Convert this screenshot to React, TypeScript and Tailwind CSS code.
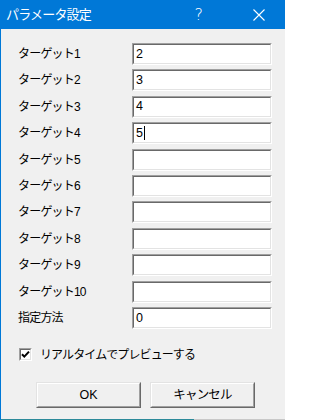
import React from "react";

const rows: { label: string; value: string; caret?: boolean }[] = [
  { label: "ターゲット1", value: "2" },
  { label: "ターゲット2", value: "3" },
  { label: "ターゲット3", value: "4" },
  { label: "ターゲット4", value: "5", caret: true },
  { label: "ターゲット5", value: "" },
  { label: "ターゲット6", value: "" },
  { label: "ターゲット7", value: "" },
  { label: "ターゲット8", value: "" },
  { label: "ターゲット9", value: "" },
  { label: "ターゲット10", value: "" },
  { label: "指定方法", value: "0" },
];

function Field({ value, caret }: { value: string; caret?: boolean }) {
  return (
    <div className="w-[140px] h-[22px] border-t border-l border-b border-r border-t-[#a0a0a0] border-l-[#a0a0a0] border-b-white border-r-white">
      <div className="h-full border border-t-[#696969] border-l-[#696969] border-b-[#e3e3e3] border-r-[#e3e3e3] bg-white flex items-center pl-[2px] text-[12.5px] text-black">
        <span>{value}</span>
        {caret && <span className="w-px h-[14px] bg-black ml-px" />}
      </div>
    </div>
  );
}

function Button({ children }: { children: React.ReactNode }) {
  return (
    <button className="w-[105px] h-[26px] border border-t-[#e3e3e3] border-l-[#e3e3e3] border-b-[#696969] border-r-[#696969]">
      <div className="h-full border border-t-white border-l-white border-b-[#a0a0a0] border-r-[#a0a0a0] bg-[#f0f0f0] flex items-center justify-center text-[12.5px] text-black">
        {children}
      </div>
    </button>
  );
}

export default function App() {
  return (
    <div className="w-[285px] h-[420px] flex flex-col bg-[#f0f0f0] font-['Liberation_Sans','Noto_Sans_CJK_JP',sans-serif] select-none">
      <div className="h-[29px] bg-[#0078d7] flex items-center text-white shrink-0">
        <span className="ml-[6px] text-[13px] tracking-[-0.8px]">パラメータ設定</span>
        <span className="ml-auto text-[16px] mr-[50px] font-['DejaVu_Sans',sans-serif] font-extralight leading-none">?</span>
        <svg width="12" height="12" viewBox="0 0 12 12" className="mr-[20px]">
          <path d="M0.5 0.5 L11.5 11.5 M11.5 0.5 L0.5 11.5" stroke="white" strokeWidth="1.1" />
        </svg>
      </div>
      <div className="flex-1 flex flex-col border-l border-[#0078d7]">
        <div className="flex flex-col gap-[4.4px] pt-[14px] pl-[17px]">
          {rows.map((r) => (
            <div key={r.label} className="flex items-center">
              <span className="w-[114px] text-[12px] text-black tracking-[-0.8px]">{r.label}</span>
              <Field value={r.value} caret={r.caret} />
            </div>
          ))}
        </div>
        <div className="flex items-center mt-[17px] pl-[18px]">
          <div className="w-[13px] h-[13px] border border-t-[#a0a0a0] border-l-[#a0a0a0] border-b-white border-r-white">
            <div className="h-full border border-t-[#696969] border-l-[#696969] border-b-[#e3e3e3] border-r-[#e3e3e3] bg-white flex items-center justify-center">
              <svg width="9" height="9" viewBox="0 0 9 9">
                <path d="M1 4.2 L3.3 6.6 L8 1.6" stroke="black" strokeWidth="2" fill="none" />
              </svg>
            </div>
          </div>
          <span className="ml-[8px] text-[12px] text-black tracking-[-0.9px]">リアルタイムでプレビューする</span>
        </div>
        <div className="flex mt-[18px] pl-[35px] gap-[9px]">
          <Button>OK</Button>
          <Button>
            <span className="tracking-[-0.8px]">キャンセル</span>
          </Button>
        </div>
        <div className="mt-auto flex h-[2px]">
          <div className="w-[193px] h-px bg-[#2b8a9a] mt-px" />
          <div className="flex-1 h-px bg-[#c8c8c8] mt-px" />
        </div>
      </div>
    </div>
  );
}
